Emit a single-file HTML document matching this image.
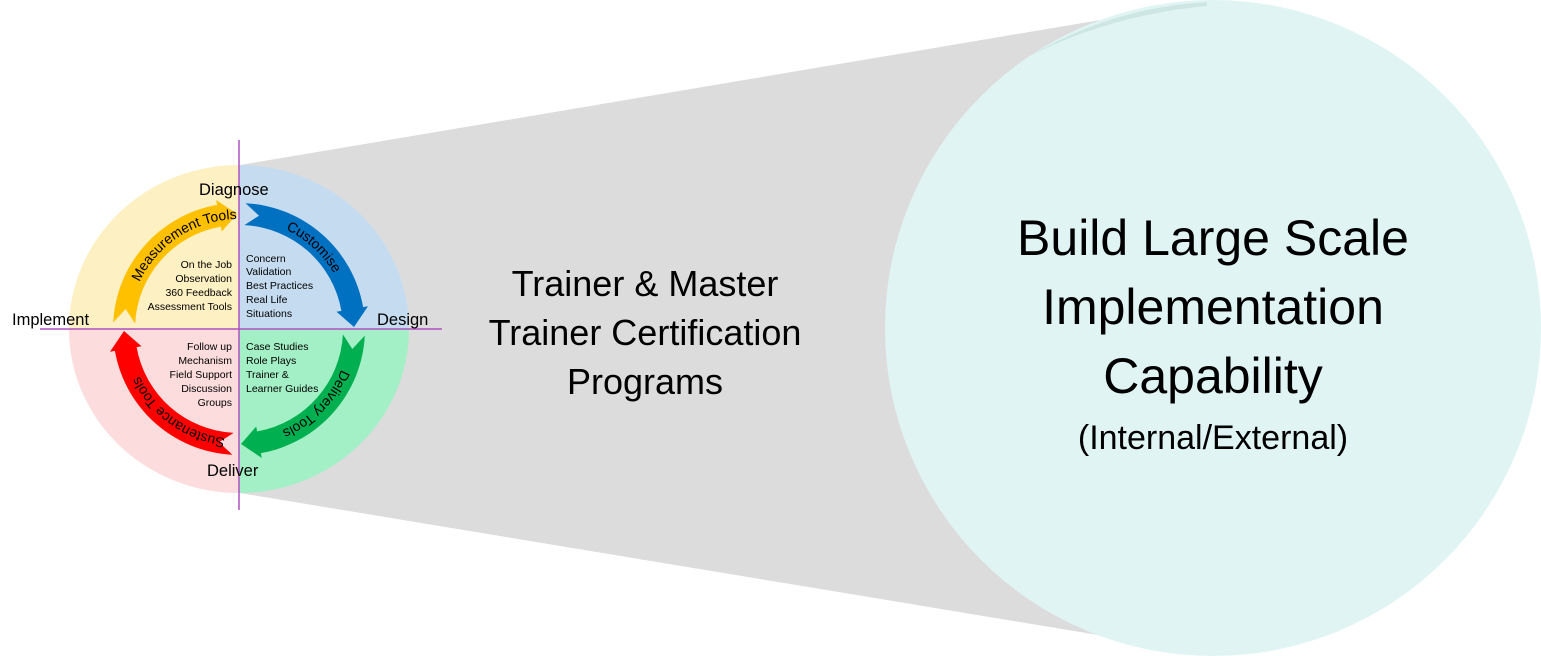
<!DOCTYPE html>
<html><head><meta charset="utf-8"><style>
html,body{margin:0;padding:0;background:#fff;}
body{width:1541px;height:656px;overflow:hidden;position:relative;font-family:"Liberation Sans",sans-serif;}
svg{position:absolute;left:0;top:0;}
</style></head><body>
<svg width="1541" height="656" viewBox="0 0 1541 656" xmlns="http://www.w3.org/2000/svg" font-family="Liberation Sans, sans-serif">
<polygon points="240,165 1207,2 1207,653 240,493" fill="#dcdcdc"/>
<circle cx="1213" cy="328" r="328" fill="#e0f4f3"/>
<path d="M1030,56 Q1110,15 1207,6 L1207,2 Q1110,8 1030,56Z" fill="#cde6e4"/>
<g transform="translate(239,329)">
<path d="M0,0 L0,-164 A170,164 0 0 1 170,0Z" fill="#c5dcf0"/>
<path d="M0,0 L170,0 A170,164 0 0 1 0,164Z" fill="#a3efc6"/>
<path d="M0,0 L0,164 A170,164 0 0 1 -170,0Z" fill="#fcdcdc"/>
<path d="M0,0 L-170,0 A170,164 0 0 1 0,-164Z" fill="#fdf0c3"/>
<path d="M6.6,-125.8 A126,126 0 0 1 124.1,-21.9 L129,-22.8 L115,-2 L97.5,-17.2 L102.4,-18.1 A104,104 0 0 0 5.4,-103.9 L20,-113.3Z" fill="#0070c0"/>
<path transform="rotate(90)" d="M6.6,-125.8 A126,126 0 0 1 124.1,-21.9 L129,-22.8 L115,-2 L97.5,-17.2 L102.4,-18.1 A104,104 0 0 0 5.4,-103.9 L20,-113.3Z" fill="#00b050"/>
<path transform="rotate(180)" d="M6.6,-125.8 A126,126 0 0 1 124.1,-21.9 L129,-22.8 L115,-2 L97.5,-17.2 L102.4,-18.1 A104,104 0 0 0 5.4,-103.9 L20,-113.3Z" fill="#ff0000"/>
<path transform="rotate(270)" d="M6.6,-125.8 A126,126 0 0 1 124.1,-21.9 L129,-22.8 L115,-2 L97.5,-17.2 L102.4,-18.1 A104,104 0 0 0 5.4,-103.9 L20,-113.3Z" fill="#ffc000"/>
<defs><path id="ring" d="M-110,0 A110,110 0 1 1 110,0 A110,110 0 1 1 -110,0"/></defs>
<text font-size="14" fill="#000"><textPath href="#ring" startOffset="7%">Measurement Tools</textPath></text>
<text font-size="14" fill="#000"><textPath href="#ring" startOffset="32%">Customise</textPath></text>
<text font-size="14" fill="#000"><textPath href="#ring" startOffset="56%">Delivery Tools</textPath></text>
<text font-size="14" fill="#000"><textPath href="#ring" startOffset="77%">Sustenance Tools</textPath></text>
</g>
<line x1="239" y1="140" x2="239" y2="510" stroke="#b050c0" stroke-width="1.5"/>
<line x1="40" y1="329" x2="442" y2="329" stroke="#b050c0" stroke-width="1.5"/>
<g font-size="16.5" fill="#000">
<text x="199" y="195">Diagnose</text>
<text x="12" y="325">Implement</text>
<text x="377" y="325">Design</text>
<text x="207" y="476">Deliver</text>
</g>
<g font-size="10.5" fill="#000" text-anchor="end">
<text x="232" y="268">On the Job</text>
<text x="232" y="282">Observation</text>
<text x="232" y="296">360 Feedback</text>
<text x="232" y="310">Assessment Tools</text>
<text x="232" y="350">Follow up</text>
<text x="232" y="364">Mechanism</text>
<text x="232" y="378">Field Support</text>
<text x="232" y="392">Discussion</text>
<text x="232" y="406">Groups</text>
</g>
<g font-size="10.5" fill="#000">
<text x="246" y="262">Concern</text>
<text x="246" y="275">Validation</text>
<text x="246" y="289">Best Practices</text>
<text x="246" y="303">Real Life</text>
<text x="246" y="317">Situations</text>
<text x="246" y="350">Case Studies</text>
<text x="246" y="364">Role Plays</text>
<text x="246" y="378">Trainer &amp;</text>
<text x="246" y="392">Learner Guides</text>
</g>
<g font-size="36" fill="#000" text-anchor="middle">
<text x="645" y="296">Trainer &amp; Master</text>
<text x="645" y="345">Trainer Certification</text>
<text x="645" y="394">Programs</text>
</g>
<g font-size="50" fill="#000" text-anchor="middle">
<text x="1213" y="255">Build Large Scale</text>
<text x="1213" y="324">Implementation</text>
<text x="1213" y="393">Capability</text>
</g>
<text x="1213" y="449" font-size="34" text-anchor="middle" fill="#000">(Internal/External)</text>
</svg>
</body></html>
